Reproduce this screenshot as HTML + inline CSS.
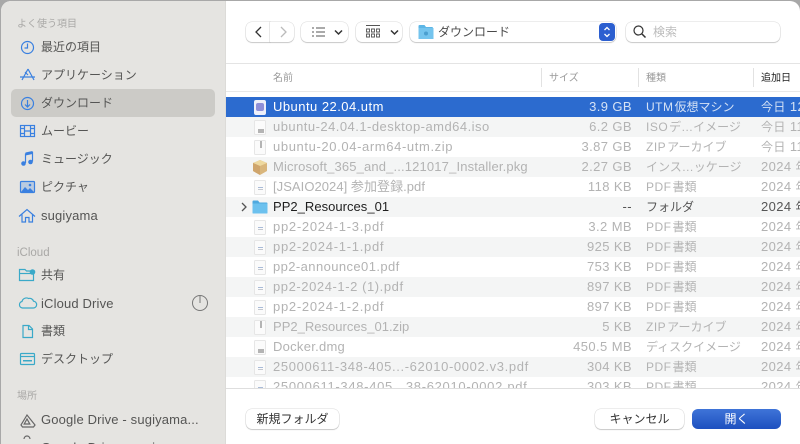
<!DOCTYPE html>
<html lang="ja"><head><meta charset="utf-8">
<style>
*{box-sizing:border-box}
html,body{margin:0;padding:0;width:800px;height:444px;overflow:hidden;background:#a8a8a8}
body{font-family:"Liberation Sans","Noto Sans CJK JP",sans-serif;font-size:13px;color:#4a4a4a;position:relative}
#win{position:absolute;left:1px;top:1px;width:799px;height:443px;background:#fff;border-radius:10px 10px 0 0;overflow:hidden}
#side{position:absolute;left:1px;top:1px;width:225px;height:443px;background:#e5e4e1;border-right:1px solid #dcdbd8;border-radius:10px 0 0 0}
.t{position:absolute;white-space:nowrap;line-height:18px}
.sh{position:absolute;left:17px;font-size:10px;color:#a9a8a6;line-height:14px}
.si{position:absolute;left:41px;font-size:12px;color:#555554;line-height:18px;white-space:nowrap}
.la{font-size:13px;letter-spacing:.15px}
svg{position:absolute;overflow:visible}
.ib{fill:none;stroke:#3a80e0;stroke-width:1.2}
.ic{fill:none;stroke:#3aa9c8;stroke-width:1.2}
.btn{position:absolute;background:#fff;border-radius:6px;box-shadow:0 0 0 .5px rgba(0,0,0,.14),0 1px 1px rgba(0,0,0,.16)}
.row{position:absolute;left:0;width:574px;height:20px}
.n,.s,.k,.d{position:absolute;top:1px;line-height:18px;white-space:nowrap;color:#b3b3b3;font-size:13px}
.n{left:47px;letter-spacing:.47px}
.s{right:168px;text-align:right;letter-spacing:.4px}
.k{left:420px;font-size:12px}
.k span{letter-spacing:.5px;margin-right:1px}
.d{left:535px;letter-spacing:.4px}
.d span{font-size:12px}
.z{background:#f4f5f5}
.hd{position:absolute;top:71px;font-size:10px;color:#9a9a9a;line-height:16px}
.sep{position:absolute;top:68px;width:1px;height:19px;background:#e2e2e2}
.doc{position:absolute;left:28px;top:3px;width:12px;height:15px;background:#fbfbfb;border:.5px solid #e6e6e6;border-radius:1.5px}
.doc i{position:absolute;left:3px;top:6px;width:5px;height:1px;background:#a9bbd8;box-shadow:0 2px 0 #c4c8d0;display:block}
.doc b{position:absolute;left:2.5px;top:7.5px;width:6.5px;height:4px;background:#b4b4b4;display:block}
.doc u{position:absolute;left:5px;top:0;width:1.5px;height:7px;background:#b4b4b4;display:block}
</style></head><body>
<div id="win"></div>
<div id="side"></div>

<div class="sh" style="top:18px">よく使う項目</div>
<div style="position:absolute;left:11px;top:89px;width:204px;height:28px;background:#cccbc7;border-radius:5px"></div>
<svg style="left:0;top:0" width="226" height="444">
 <g class="ib">
  <circle cx="27.500" cy="47.500" r="6"/><path d="M27.500 43.500v4.500h-3"/>
  <path d="M28 69l-6 11M28 69l6 11M20 77h15M25 72l3 3"/>
  <circle cx="27.500" cy="103.500" r="6"/><path d="M27.500 100v6.500M25 104.500l2.500 2.500 2.500-2.500"/>
  <rect x="20.500" y="125.500" width="14" height="11"/><path d="M24.500 125.500v11M30.500 125.500v11M24.500 131h6M20.500 128.500h4M20.500 133.500h4M30.500 128.500h4M30.500 133.500h4"/>
  <path d="M25.500 163v-9l7-1.500v9"/>
 </g>
 <circle cx="23.500" cy="163.500" r="2.300" fill="#3a80e0"/><circle cx="30.500" cy="162" r="2.300" fill="#3a80e0"/>
 <path d="M25.500 155.500v-3l7-1.500v3z" fill="#3a80e0"/>
 <rect x="20.500" y="181.500" width="14" height="11" rx="1" fill="none" stroke="#3a80e0" stroke-width="1.200"/>
 <rect x="21" y="182" width="13" height="10" fill="#3a80e0" opacity=".25"/>
 <path d="M21 192l4-5 3 3 2-2 4 4z" fill="#3a80e0"/><circle cx="30" cy="185" r="1.300" fill="#3a80e0"/>
 <g class="ib"><path d="M19 216.500l8-7 8 7M22 214.500v7.500h3.500v-4.500h3.500v4.500h3.500v-7.500"/></g>
 <g class="ic">
  <path d="M19.500 280.500v-11h5.500l1.500 1.500h7v9.500z"/><path d="M19.500 273.500h14"/>
  <path d="M24 308h-1.500a3.300 3.300 0 0 1-.5-6.500 4.500 4.500 0 0 1 6.500-3 4 4 0 0 1 5 2.700 3.300 3.300 0 0 1-.5 6.800z"/>
  <path d="M23 325.500h6l3.500 3.500v8.500h-9.500z"/><path d="M28.500 325.500v4h4"/>
  <rect x="20.500" y="353.500" width="14" height="11" rx="1"/><path d="M20.500 356.500h14"/>
 </g>
 <rect x="23" y="360" width="9" height="1.500" fill="#3aa9c8"/>
 <circle cx="32.500" cy="272" r="2.800" fill="#3aa9c8"/>
 <circle cx="200" cy="303" r="7.500" fill="none" stroke="#777" stroke-width="1"/><path d="M200 296v7" stroke="#777" stroke-width="1"/>
 <path d="M27 415l-6 10 1.500 2h11l1.500-2zM27 419l-2.800 5h5.600z" fill="none" stroke="#666" stroke-width="1.200"/>
 <path d="M24 439a3 3 0 0 1 6 0" fill="none" stroke="#666" stroke-width="1.200"/>
</svg>
<div class="si" style="top:38px">最近の項目</div>
<div class="si" style="top:66px">アプリケーション</div>
<div class="si" style="top:94px">ダウンロード</div>
<div class="si" style="top:122px">ムービー</div>
<div class="si" style="top:150px">ミュージック</div>
<div class="si" style="top:178px">ピクチャ</div>
<div class="si la" style="top:207px">sugiyama</div>
<div class="sh" style="top:246px;font-size:11.500px">iCloud</div>
<div class="si" style="top:266px">共有</div>
<div class="si la" style="top:295px">iCloud Drive</div>
<div class="si" style="top:322px">書類</div>
<div class="si" style="top:350px">デスクトップ</div>
<div class="sh" style="top:390px">場所</div>
<div class="si la" style="top:411px">Google Drive - sugiyama...</div>
<div class="si la" style="top:439px">Google Drive - sugi</div>

<!-- toolbar -->
<div class="btn" style="left:246px;top:22px;width:24px;height:20px;border-radius:6px 0 0 6px"></div>
<div class="btn" style="left:270px;top:22px;width:24px;height:20px;border-radius:0 6px 6px 0"></div>
<div class="btn" style="left:301px;top:22px;width:47px;height:20px"></div>
<div class="btn" style="left:356px;top:22px;width:46px;height:20px"></div>
<div class="btn" style="left:410px;top:22px;width:206px;height:20px"></div>
<div class="btn" style="left:626px;top:22px;width:154px;height:20px"></div>
<svg style="left:0;top:0" width="800" height="60">
 <path d="M261 27l-5 5 5 5" fill="none" stroke="#333" stroke-width="1.300"/>
 <path d="M281 27l5 5-5 5" fill="none" stroke="#bbb" stroke-width="1.300"/>
 <path d="M316 28h9M316 32h9M316 36h9" stroke="#555" stroke-width="1"/>
 <path d="M312 28h2M312 32h2M312 36h2" stroke="#555" stroke-width="1"/>
 <path d="M335 30.500l3.500 3.500 3.500-3.500" fill="none" stroke="#333" stroke-width="1.500"/>
 <path d="M366 25.500h14" stroke="#555" stroke-width="1"/>
 <path d="M366.500 29h3v3h-3zM371.500 29h3v3h-3zM376.500 29h3v3h-3zM366.500 34h3v3h-3zM371.500 34h3v3h-3zM376.500 34h3v3h-3z" fill="none" stroke="#555" stroke-width=".9"/>
 <path d="M391 30.500l3.500 3.500 3.500-3.500" fill="none" stroke="#333" stroke-width="1.500"/>
 <path d="M418.500 39v-13a1 1 0 0 1 1-1h5l1.500 2h6a1 1 0 0 1 1 1v11z" fill="#5cb6e6"/>
 <rect x="418.500" y="28" width="15" height="11" fill="#74c4ee"/>
 <circle cx="426" cy="33.500" r="2" fill="#4a9fd0"/>
 <rect x="599" y="23" width="16" height="18" rx="4" fill="#2c5fd0"/>
 <path d="M604.500 30l2.500-2.500 2.500 2.500M604.500 34l2.500 2.500 2.500-2.500" fill="none" stroke="#fff" stroke-width="1.300"/>
 <circle cx="638.500" cy="30.500" r="4.500" fill="none" stroke="#333" stroke-width="1.200"/>
 <path d="M642 34l3.500 3.500" stroke="#333" stroke-width="1.500"/>
</svg>
<div class="t" style="left:438px;top:23px;font-size:12px;color:#4a4a4a">ダウンロード</div>
<div class="t" style="left:653px;top:23px;font-size:12px;color:#bcbcbc">検索</div>

<!-- header -->
<div style="position:absolute;left:226px;top:63px;width:574px;height:1px;background:#e4e4e4"></div>
<div style="position:absolute;left:226px;top:91px;width:574px;height:1px;background:#e8e8e8"></div>
<div class="hd" style="left:273px">名前</div>
<div class="sep" style="left:541px"></div>
<div class="hd" style="left:549px">サイズ</div>
<div class="sep" style="left:638px"></div>
<div class="hd" style="left:646px">種類</div>
<div class="sep" style="left:753px"></div>
<div class="hd" style="left:761px;color:#222">追加日</div>

<!-- rows -->
<div style="position:absolute;left:226px;top:92px;width:574px;height:296px;overflow:hidden">
<div class="row" style="top:5px;background:#2c6bcf">
 <div class="doc" style="background:#eef0fa;border:0;border-radius:2px"><i style="left:2px;top:3px;width:8px;height:8px;background:#8f8fd8;border-radius:2px;box-shadow:none"></i></div>
 <div class="n" style="color:#fff">Ubuntu 22.04.utm</div><div class="s" style="color:#d5e2f5">3.9 GB</div><div class="k" style="color:#d5e2f5"><span>UTM</span>仮想マシン</div><div class="d" style="color:#d5e2f5"><span>今日</span> 12</div>
</div>
<div class="row z" style="top:25px"><div class="doc"><b></b></div><div class="n">ubuntu-24.04.1-desktop-amd64.iso</div><div class="s">6.2 GB</div><div class="k"><span>ISO</span>デ…イメージ</div><div class="d"><span>今日</span> 11</div></div>
<div class="row" style="top:45px"><div class="doc"><u></u></div><div class="n" style="letter-spacing:.62px">ubuntu-20.04-arm64-utm.zip</div><div class="s">3.87 GB</div><div class="k"><span>ZIP</span>アーカイブ</div><div class="d"><span>今日</span> 11</div></div>
<div class="row z" style="top:65px">
 <svg style="left:26px;top:3px" width="16" height="15"><path d="M8 0l7 3v8l-7 4-7-4V3z" fill="#d9b67c"/><path d="M8 0l7 3-7 3-7-3z" fill="#eed9a0"/><path d="M1 3l7 3v9l-7-4z" fill="#cfa56c"/></svg>
 <div class="n" style="letter-spacing:.15px">Microsoft_365_and_...121017_Installer.pkg</div><div class="s">2.27 GB</div><div class="k">インス…ッケージ</div><div class="d">2024 <span>年</span></div></div>
<div class="row" style="top:85px"><div class="doc"><i></i></div><div class="n" style="letter-spacing:.05px">[JSAIO2024] 参加登録.pdf</div><div class="s">118 KB</div><div class="k"><span>PDF</span>書類</div><div class="d">2024 <span>年</span></div></div>
<div class="row z" style="top:105px">
 <svg style="left:14px;top:5px" width="8" height="10"><path d="M2 1l4 4-4 4" fill="none" stroke="#555" stroke-width="1.300"/></svg>
 <svg style="left:26px;top:3px" width="16" height="14"><path d="M.5 13V1.500a1 1 0 0 1 1-1h4.500l1.500 2h7a1 1 0 0 1 1 1V13z" fill="#4ea9df"/><rect x=".5" y="3.500" width="15" height="10" rx=".5" fill="#6cc1ee"/></svg>
 <div class="n" style="color:#1f1f1f;letter-spacing:.03px">PP2_Resources_01</div><div class="s" style="color:#555">--</div><div class="k" style="color:#555">フォルダ</div><div class="d" style="color:#555">2024 <span>年</span></div></div>
<div class="row" style="top:125px"><div class="doc"><i></i></div><div class="n" style="letter-spacing:.72px">pp2-2024-1-3.pdf</div><div class="s">3.2 MB</div><div class="k"><span>PDF</span>書類</div><div class="d">2024 <span>年</span></div></div>
<div class="row z" style="top:145px"><div class="doc"><i></i></div><div class="n" style="letter-spacing:.72px">pp2-2024-1-1.pdf</div><div class="s">925 KB</div><div class="k"><span>PDF</span>書類</div><div class="d">2024 <span>年</span></div></div>
<div class="row" style="top:165px"><div class="doc"><i></i></div><div class="n" style="letter-spacing:.41px">pp2-announce01.pdf</div><div class="s">753 KB</div><div class="k"><span>PDF</span>書類</div><div class="d">2024 <span>年</span></div></div>
<div class="row z" style="top:185px"><div class="doc"><i></i></div><div class="n" style="letter-spacing:.57px">pp2-2024-1-2 (1).pdf</div><div class="s">897 KB</div><div class="k"><span>PDF</span>書類</div><div class="d">2024 <span>年</span></div></div>
<div class="row" style="top:205px"><div class="doc"><i></i></div><div class="n" style="letter-spacing:.72px">pp2-2024-1-2.pdf</div><div class="s">897 KB</div><div class="k"><span>PDF</span>書類</div><div class="d">2024 <span>年</span></div></div>
<div class="row z" style="top:225px"><div class="doc"><u></u></div><div class="n" style="letter-spacing:.02px">PP2_Resources_01.zip</div><div class="s">5 KB</div><div class="k"><span>ZIP</span>アーカイブ</div><div class="d">2024 <span>年</span></div></div>
<div class="row" style="top:245px"><div class="doc"><b></b></div><div class="n" style="letter-spacing:.27px">Docker.dmg</div><div class="s">450.5 MB</div><div class="k">ディスクイメージ</div><div class="d">2024 <span>年</span></div></div>
<div class="row z" style="top:265px"><div class="doc"><i></i></div><div class="n" style="letter-spacing:.63px">25000611-348-405...-62010-0002.v3.pdf</div><div class="s">304 KB</div><div class="k"><span>PDF</span>書類</div><div class="d">2024 <span>年</span></div></div>
<div class="row" style="top:285px"><div class="doc"><i></i></div><div class="n" style="letter-spacing:.69px">25000611-348-405...38-62010-0002.pdf</div><div class="s">303 KB</div><div class="k"><span>PDF</span>書類</div><div class="d">2024 <span>年</span></div></div>
</div>
<div style="position:absolute;left:226px;top:388px;width:574px;height:1px;background:#dedede"></div>

<!-- footer -->
<div class="btn" style="left:246px;top:409px;width:93px;height:20px;text-align:center;font-size:12px;line-height:20px;color:#333">新規フォルダ</div>
<div class="btn" style="left:595px;top:409px;width:89px;height:20px;text-align:center;font-size:12px;line-height:20px;color:#333">キャンセル</div>
<div class="btn" style="left:692px;top:409px;width:89px;height:20px;text-align:center;font-size:12px;line-height:20px;color:#fff;background:linear-gradient(#3f74d8,#1d50bf);box-shadow:none">開く</div>
</body></html>
